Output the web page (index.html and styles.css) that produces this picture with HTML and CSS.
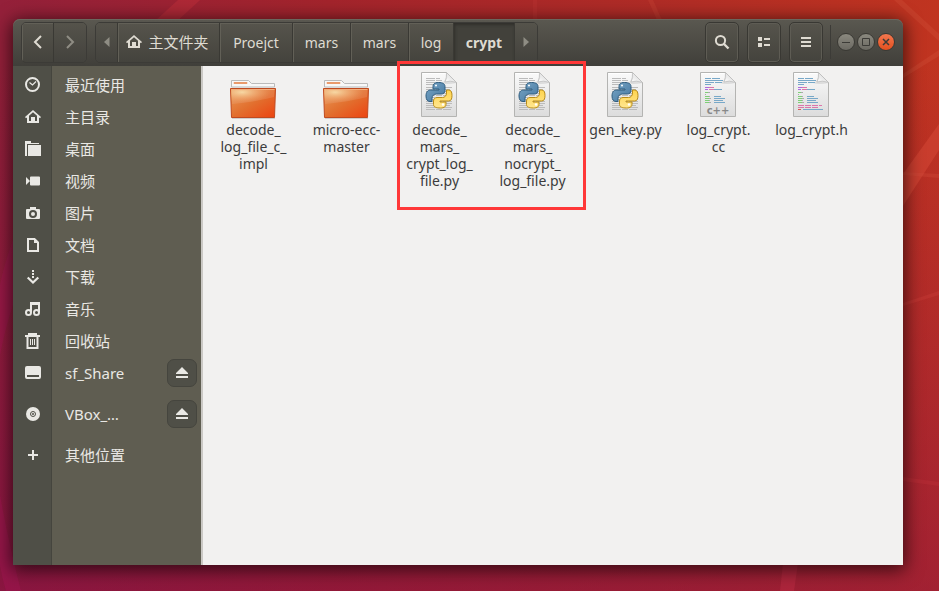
FILE: index.html
```html
<!DOCTYPE html>
<html lang="zh-CN">
<head>
<meta charset="utf-8">
<title>crypt</title>
<link rel="stylesheet" href="styles.css">
</head>
<body>
<svg class="wallpaper" viewBox="0 0 939 591" preserveAspectRatio="none" aria-hidden="true">
  <path d="M178 0h22L176 22h-22z" fill="#c8323c" opacity=".4"/>
  <path d="M533 0h4v20h-4z" fill="#c43a38" opacity=".25"/>
  <path d="M648 0h5l9 20h-5z" fill="#c94a38" opacity=".3"/>
  <path d="M894 0h8l37 34v7z" fill="#d05038" opacity=".35"/>
  <path d="M939 50v6l-36 22v-4z" fill="#d05038" opacity=".35"/>
  <path d="M939 124v26l-36 56v-32z" fill="#d84a38" opacity=".5"/>
  <path d="M903 172l36 2v4l-36-3z" fill="#d04a38" opacity=".35"/>
  <path d="M939 291v4l-36 11v-3z" fill="#c83c38" opacity=".4"/>
  <path d="M903 477l36 5v4l-36-5z" fill="#c03038" opacity=".35"/>
  <path d="M783 563h15l-4 28h-14z" fill="#c8304a" opacity=".35"/>
  <path d="M13 240Q4 265 0 285v70q6-30 13-50zM0 495q8 45 21 96H6Q2 578 0 565z" fill="#a8155a" opacity=".35"/>
</svg>

<svg class="symbols" aria-hidden="true">
  <defs>
    <linearGradient id="paper" x1="0" y1="0" x2="0" y2="1"><stop offset="0" stop-color="#fafafa"/><stop offset="1" stop-color="#dcdcdc"/></linearGradient>
    <linearGradient id="curl" x1="0" y1="1" x2="1" y2="0"><stop offset="0" stop-color="#fff"/><stop offset=".5" stop-color="#e8e8e8"/><stop offset="1" stop-color="#bbb"/></linearGradient>
    <linearGradient id="flap" x1="0" y1="0" x2="1" y2="1"><stop offset="0" stop-color="#ea9a58"/><stop offset=".5" stop-color="#e2702f"/><stop offset="1" stop-color="#ec4310"/></linearGradient>
    <radialGradient id="glow" cx=".25" cy=".2" r=".65"><stop offset="0" stop-color="#f6d49a"/><stop offset="1" stop-color="#f0a060" stop-opacity="0"/></radialGradient>
    <linearGradient id="blue" x1="0" y1="0" x2="1" y2="1"><stop offset="0" stop-color="#79a6c6"/><stop offset="1" stop-color="#4577a0"/></linearGradient>
    <linearGradient id="yellow" x1="0" y1="0" x2="0" y2="1"><stop offset="0" stop-color="#ffd44d"/><stop offset="1" stop-color="#ffe690"/></linearGradient>
  </defs>
  <symbol id="home" viewBox="0 0 16 16"><path d="M8 1L0 8l1 1.200L2 8.500V14h12V8.500l1 .7L16 8zM8 3.200l4 3.500V12H10V8H6v4H4V6.700z" fill="currentColor" fill-rule="evenodd"/></symbol>
  <symbol id="eject" viewBox="0 0 12 12"><path d="M6 0l6 6v1H0V6zM0 9h12v2H0z" fill="currentColor"/></symbol>
  <symbol id="page" viewBox="0 0 47 48">
    <path d="M5.500 1.500h25l10 10v34h-35z" fill="url(#paper)" stroke="#b4b4b2"/>
    <path d="M6.500 2.500h23" stroke="#fff"/>
    <path d="M25 12q5 0 5-10.500L40.500 12q-10 2-15.500 0z" fill="#999" opacity=".25"/>
    <path d="M30.500 1.500q1 5-1.500 9.500 5-2 11.500 .5z" fill="url(#curl)" stroke="#bcbcbc" stroke-width=".7"/>
  </symbol>
  <symbol id="python" viewBox="0 0 47 48">
    <use href="#page"/>
    <path d="M10 7.500h14M10 9.500h16M10 11.500h15M10 13.500h12M10 16.500h26M10 18.500h24M10 20.500h26M10 22.500h26M10 24.500h26M10 26.500h25M10 28.500h26M10 30.500h26M10 32.500h26M10 34.500h24M10 36.500h26M10 38.500h25" stroke="#bbb" stroke-dasharray="9 1 6 1"/>
    <path d="M22.500 11.500c-4 0-5.500 1.500-5.500 4v2.500h6v1h-8.500c-3 0-4.500 2.500-4.500 6s1.500 5.500 4 5.500h2v-3c0-3 2-4.500 4.500-4.500h5c2 0 3.500-1.500 3.500-3.500v-4c0-2.500-2-4-6.500-4z" fill="url(#blue)" stroke="#315e80"/>
    <path d="M24.500 37c4 0 5.500-1.500 5.500-4v-2h-6v-1h8.500c2.500 0 3.500-2 3.500-5.500s-1-5.500-3.500-5.500h-2v3c0 3-2 4.500-4 4.500h-5.500c-2 0-3.500 1.500-3.500 3.500v3.500c0 2.500 2.500 3.500 7 3.500z" fill="url(#yellow)" stroke="#b98c18"/>
    <circle cx="20" cy="14.500" r="1" fill="#fff"/><circle cx="27" cy="33.500" r="1.200" fill="#fff"/>
  </symbol>
  <symbol id="source" viewBox="0 0 47 48">
    <use href="#page"/>
    <g fill="none">
      <path d="M10 7.500h6m1 0h8M10 9.500h18M10 11.500h9m1 0h7M10 13.500h6" stroke="#78a8c8"/>
      <path d="M10 16.500h4M10 18.500h3" stroke="#ad6be0"/><path d="M14 16.500h5M14 18.500h5" stroke="#dc76ab"/><path d="M19 18.500h8" stroke="#78a8c8"/>
      <path d="M10 21.500h3M10 25.500h4M10 27.500h4M10 29.500h4M10 31.500h4" stroke="#7dcf75"/><path d="M13 21.500h2M10 23.500h1M14 25.500h1M14 27.500h2M14 29.500h1M14 31.500h2" stroke="#aaa"/>
      <path d="M19 25.500h7M19 27.500h11M19 29.500h9M19 31.500h11" stroke="#78a8c8"/>
    </g>
  </symbol>
  <symbol id="folder" viewBox="0 0 47 48">
    <path d="M1.500 15V9.500h17l3 3h23V16h-43z" fill="#f8f8f8" stroke="#bbb"/>
    <path d="M4 11.500h13v1H4z" fill="#e99a6c" stroke="#e99a6c"/>
    <path d="M2 47.300h43" stroke="#999" opacity=".5"/>
    <path d="M.5 17.500h45l-1 29h-43z" fill="url(#flap)" stroke="#bf4a20"/>
    <path d="M1 18h44l-.3 10Q22 33 1.500 34z" fill="url(#glow)"/>
    <path d="M1.500 18.500h43L44 26Q25 31 2 33z" fill="#fff" opacity=".1"/>
    <path d="M1.500 18.500h43" stroke="#f3ae7c"/>
  </symbol>
</svg>

<main class="window">
  <header class="titlebar">
    <nav class="group history" aria-label="历史">
      <button type="button" aria-label="后退"><svg width="10" height="14" viewBox="0 0 10 14"><path d="M8 1L2 7l6 6" fill="none" stroke="currentColor" stroke-width="2"/></svg></button>
      <button type="button" aria-label="前进" class="dim"><svg width="10" height="14" viewBox="0 0 10 14"><path d="M2 1l6 6-6 6" fill="none" stroke="currentColor" stroke-width="2"/></svg></button>
    </nav>
    <nav class="group path" aria-label="路径">
      <button type="button" class="arrow dim" aria-label="向左"><svg width="6" height="10" viewBox="0 0 6 10"><path d="M5.500 0v10L0 5z" fill="currentColor"/></svg></button>
      <button type="button" class="root"><svg width="16" height="16"><use href="#home"/></svg><span>主文件夹</span></button>
      <button type="button" class="wide">Proejct</button>
      <button type="button" class="mid">mars</button>
      <button type="button" class="mid">mars</button>
      <button type="button" class="slim">log</button>
      <button type="button" class="current">crypt</button>
      <button type="button" class="arrow dim" aria-label="向右"><svg width="6" height="10" viewBox="0 0 6 10"><path d="M.5 0v10L6 5z" fill="currentColor"/></svg></button>
    </nav>
    <div class="tools">
      <button type="button" aria-label="搜索"><svg width="16" height="16" viewBox="0 0 16 16"><circle cx="6.500" cy="6.500" r="4.600" fill="none" stroke="currentColor" stroke-width="2"/><path d="M9.500 9.500l5 5" stroke="currentColor" stroke-width="2.400"/></svg></button>
      <button type="button" aria-label="列表视图"><svg width="12" height="12" viewBox="0 0 12 12"><path d="M0 1h4v4H0zM0 7h4v4H0zM6 2h6v2H6zM6 8h6v2H6z" fill="currentColor"/></svg></button>
      <button type="button" aria-label="菜单"><svg width="10" height="12" viewBox="0 0 10 12"><path d="M0 1h10v2H0zM0 5h10v2H0zM0 9h10v2H0z" fill="currentColor"/></svg></button>
    </div>
    <div class="controls">
      <button type="button" aria-label="最小化"><svg width="10" height="10" viewBox="0 0 10 10"><path d="M1 5.500h8" stroke="currentColor"/></svg></button>
      <button type="button" aria-label="最大化"><svg width="10" height="10" viewBox="0 0 10 10"><path d="M1.500 1.500h7v7h-7z" fill="none" stroke="currentColor"/></svg></button>
      <button type="button" aria-label="关闭" class="close"><svg width="10" height="10" viewBox="0 0 10 10"><path d="M2 2l6 6M8 2L2 8" stroke="currentColor" stroke-width="1.500"/></svg></button>
    </div>
  </header>

  <div class="body">
    <aside class="sidebar">
      <ul>
        <li><a href="#"><span class="icon"><svg viewBox="0 0 16 16"><circle cx="7.500" cy="7.500" r="6.500" fill="none" stroke="currentColor" stroke-width="2"/><path d="M4.500 5.500l3 2.500L11 4.500" fill="none" stroke="currentColor" stroke-width="1.200"/></svg></span>最近使用</a></li>
        <li><a href="#"><span class="icon"><svg><use href="#home"/></svg></span>主目录</a></li>
        <li><a href="#"><span class="icon"><svg viewBox="0 0 16 16"><path d="M0 0h6v2h8v1H2v12H0zM3 4h13v11H3z" fill="currentColor"/></svg></span>桌面</a></li>
        <li><a href="#"><span class="icon"><svg viewBox="0 0 16 16"><path d="M1 4l4 4-4 4zM6 3.500h8q1 0 1 1v7q0 1-1 1H6q-1 0-1-1v-7q0-1 1-1z" fill="currentColor"/></svg></span>视频</a></li>
        <li><a href="#"><span class="icon"><svg viewBox="0 0 16 16"><path fill-rule="evenodd" d="M5 2h6v2h3q1 0 1 1v8q0 1-1 1H2q-1 0-1-1V5q0-1 1-1h3zM8 5a4 4 0 100 8 4 4 0 000-8zM8 7a2 2 0 110 4 2 2 0 010-4z" fill="currentColor"/></svg></span>图片</a></li>
        <li><a href="#"><span class="icon"><svg viewBox="0 0 16 16"><path d="M3 2h6.500L13 5.500V14H3z" fill="none" stroke="currentColor" stroke-width="2"/><path d="M9 2l4 4H9z" fill="currentColor"/></svg></span>文档</a></li>
        <li><a href="#"><span class="icon"><svg viewBox="0 0 16 16"><path d="M7 1h2v2H7zM7 4h2v2H7zM7 7h2v2H7z" fill="currentColor"/><path d="M2.700 8.500L8 13.500l5.300-5" fill="none" stroke="currentColor" stroke-width="2.200"/></svg></span>下载</a></li>
        <li><a href="#"><span class="icon"><svg viewBox="0 0 16 16"><path d="M6 11V2h8v9M6 3h8" fill="none" stroke="currentColor" stroke-width="2"/><circle cx="3.500" cy="11.500" r="2.500" fill="none" stroke="currentColor" stroke-width="2"/><circle cx="11.500" cy="11.500" r="2.500" fill="none" stroke="currentColor" stroke-width="2"/></svg></span>音乐</a></li>
        <li><a href="#"><span class="icon"><svg viewBox="0 0 16 16"><path d="M0 3h15M4 2V1h7v1M2.500 4v11h10V4" fill="none" stroke="currentColor" stroke-width="2"/><path d="M5.500 6v6M7.500 6v6M9.500 6v6" stroke="currentColor"/></svg></span>回收站</a></li>
        <li class="mount"><a href="#"><span class="icon"><svg viewBox="0 0 16 16"><path fill-rule="evenodd" d="M2 1h12q2 0 2 2v9q0 2-2 2H2q-2 0-2-2V3q0-2 2-2zM2 10v2h12v-2z" fill="currentColor"/></svg></span>sf_Share</a><button type="button" aria-label="弹出 sf_Share"><svg width="12" height="12"><use href="#eject"/></svg></button></li>
        <li class="mount"><a href="#"><span class="icon"><svg viewBox="0 0 16 16"><circle cx="8" cy="8" r="7" fill="currentColor"/><circle cx="8" cy="8" r="2.500" fill="none" stroke="#4f4f47"/><circle cx="8" cy="8" r="1" fill="#4f4f47"/></svg></span>VBox_…</a><button type="button" aria-label="弹出 VBox"><svg width="12" height="12"><use href="#eject"/></svg></button></li>
        <li><a href="#"><span class="icon"><svg viewBox="0 0 16 16"><path d="M3 8h10M8 3v10" stroke="currentColor" stroke-width="2"/></svg></span>其他位置</a></li>
      </ul>
    </aside>

    <section class="files" aria-label="文件">
      <figure><svg><use href="#folder"/></svg><figcaption>decode_<br>log_file_c_<br>impl</figcaption></figure>
      <figure><svg><use href="#folder"/></svg><figcaption>micro-ecc-<br>master</figcaption></figure>
      <figure><svg><use href="#python"/></svg><figcaption>decode_<br>mars_<br>crypt_log_<br>file.py</figcaption></figure>
      <figure><svg><use href="#python"/></svg><figcaption>decode_<br>mars_<br>nocrypt_<br>log_file.py</figcaption></figure>
      <figure><svg><use href="#python"/></svg><figcaption>gen_key.py</figcaption></figure>
      <figure><svg viewBox="0 0 47 48"><use href="#source"/><text x="23" y="43" class="badge">c++</text></svg><figcaption>log_crypt.<br>cc</figcaption></figure>
      <figure><svg viewBox="0 0 47 48"><use href="#source"/><path d="M10 34.500h24M10 36.500h20" stroke="#dc76ab" stroke-dasharray="6 1"/><path d="M10 38.500h3" stroke="#df5555"/><path d="M15 38.500h20" stroke="#78a8c8"/></svg><figcaption>log_crypt.h</figcaption></figure>
      <div class="highlight"></div>
    </section>
  </div>
</main>
</body>
</html>
```

FILE: styles.css
```css
* { box-sizing: border-box; }

body {
  margin: 0;
  min-height: 100vh;
  padding: 19px 36px 26px 13px;
  display: flex;
  position: relative;
  overflow: hidden;
  font: 14px/17px "Noto Sans", "Noto Sans CJK SC", sans-serif;
  background:
    linear-gradient(to bottom, rgba(125, 10, 72, 0) 10%, rgba(125, 10, 72, .45) 100%),
    linear-gradient(to right, #94203a, #a3242c 35%, #b02c26 70%, #c03420);
}

button {
  margin: 0;
  padding: 0;
  border: 0;
  font: inherit;
  color: inherit;
  background: none;
  display: flex;
  align-items: center;
  justify-content: center;
}

.wallpaper {
  position: absolute;
  inset: 0;
  width: 100%;
  height: 100%;
}

.symbols {
  position: absolute;
  width: 0;
  height: 0;
}

.window {
  flex: 1;
  display: flex;
  flex-direction: column;
  position: relative;
  border-radius: 7px 7px 0 0;
  box-shadow: 0 3px 18px 2px rgba(0, 0, 0, .65);
}

.titlebar {
  display: flex;
  align-items: center;
  height: 47px;
  padding: 0 8px 1px;
  border-radius: 7px 7px 0 0;
  color: #dfdbd2;
  background: linear-gradient(#5a5850, #403f3a);
  box-shadow: inset 0 1px #6a675e;
}

.group {
  display: flex;
  height: 41px;
  border: 1px solid #3c3b37;
  border-radius: 5px;
  overflow: hidden;
  background: linear-gradient(#56544c, #44433d);
}

.group button {
  border-right: 1px solid #3a3934;
  box-shadow: inset 1px 1px #626057;
}

.group button:last-child { border-right: 0; }

.group .dim {
  color: #8f8d84;
  background: linear-gradient(#55534b, #43423d);
  box-shadow: none;
}

.history { margin-right: 8px; }
.history button { width: 32px; }

.path .arrow { width: 22px; }
.path .root { width: 102px; padding-right: 2px; gap: 6px; font-size: 15px; }
.path .wide { width: 73px; }
.path .mid { width: 58px; }
.path .slim { width: 45px; }

.path .current {
  width: 61px;
  font-weight: bold;
  background: #42413b;
  box-shadow: inset 1px 2px 3px #302f2b;
}

.tools {
  display: flex;
  gap: 8px;
  margin-left: auto;
  padding-right: 7px;
}

.tools button {
  width: 34px;
  height: 41px;
  border: 1px solid #393833;
  border-radius: 5px;
  background: linear-gradient(#56544c, #44433d);
  box-shadow: inset 0 0 0 1px #5e5c54;
}

.controls {
  display: flex;
  align-items: center;
  gap: 2px;
  height: 34px;
  padding-left: 6px;
  border-left: 1px solid #3c3b37;
}

.controls button {
  width: 18px;
  height: 18px;
  border: 1px solid #3a3934;
  border-radius: 50%;
  color: #3c3b37;
  background: linear-gradient(#8b897f, #6b6962);
}

.controls .close { background: linear-gradient(#f4784f, #e2501f); }

.body {
  flex: 1;
  display: flex;
  background: #f2f1f0;
}

.sidebar {
  width: 190px;
  border-right: 2px solid #cbc9c5;
  color: #e9e8e4;
  background: linear-gradient(to right, #4f4f47 38px, #45453e 38px, #45453e 39px, #5f5d51 39px);
}

.sidebar ul {
  list-style: none;
  margin: 0;
  padding: 3px 0 0;
}

.sidebar li {
  display: flex;
  align-items: center;
  height: 32px;
}

.sidebar .mount { margin-bottom: 9px; }

.sidebar a {
  flex: 1;
  display: flex;
  align-items: center;
  gap: 12px;
  color: inherit;
  text-decoration: none;
  font-size: 15px;
}

.sidebar .icon {
  width: 40px;
  display: flex;
  justify-content: center;
}

.sidebar .icon svg {
  width: 16px;
  height: 16px;
  overflow: visible;
}

.sidebar button {
  width: 30px;
  height: 28px;
  margin-right: 4px;
  border: 1px solid #45453e;
  border-radius: 7px;
  background: #4f4f47;
}

.files {
  flex: 1;
  display: grid;
  grid-template-columns: repeat(auto-fill, 93px);
  align-content: start;
  padding: 5px 4px;
  position: relative;
  color: #3c3c3c;
}

.files figure {
  margin: 0;
  display: flex;
  flex-direction: column;
  align-items: center;
  gap: 2px;
  text-align: center;
}

.files figure svg {
  width: 47px;
  height: 48px;
}

.badge {
  font: bold 10px "DejaVu Sans", sans-serif;
  text-anchor: middle;
  fill: #888;
}

.highlight {
  position: absolute;
  left: 194px;
  top: -5px;
  width: 189px;
  height: 149px;
  border: 3px solid #ff3838;
}
```
